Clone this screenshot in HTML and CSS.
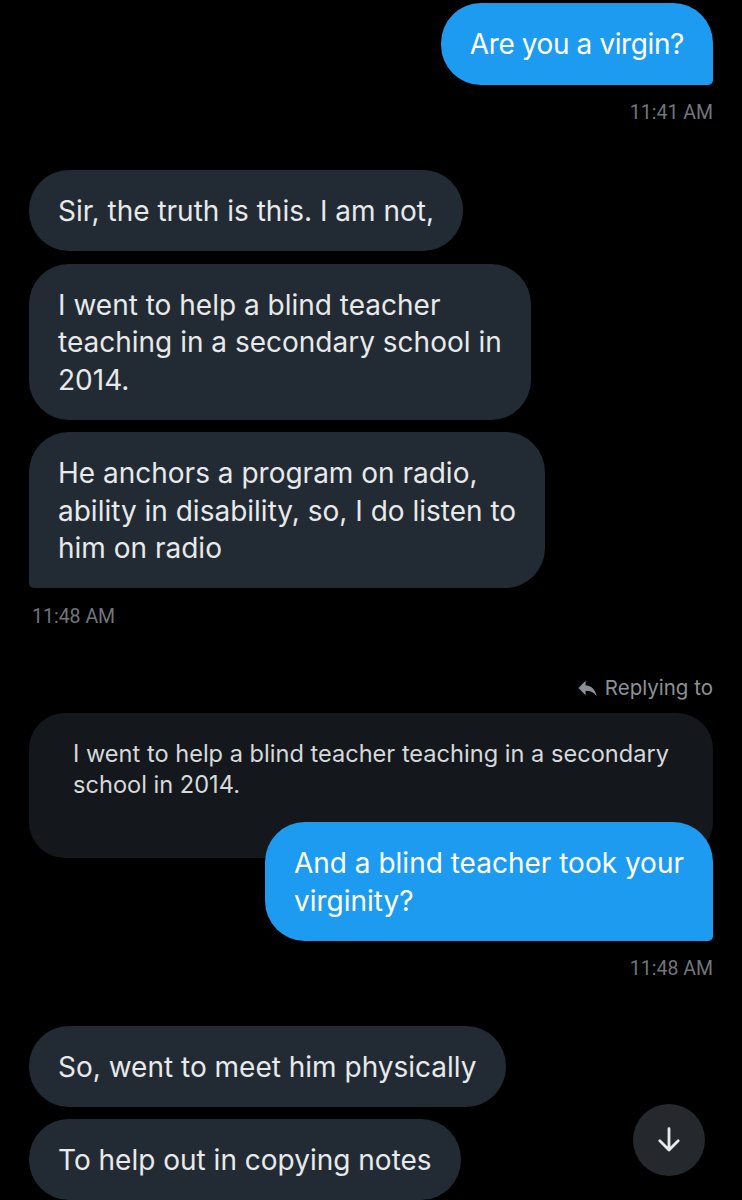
FILE: index.html
```html
<!DOCTYPE html>
<html>
<head>
<meta charset="utf-8">
<link rel="stylesheet" href="styles.css">
</head>
<body>
<div class="chat">
  <div class="msg sent first"><div class="bubble blue last tight">Are you a virgin?</div></div>
  <div class="time right">11:41 AM</div>

  <div class="group recv-group">
    <div class="bubble dark">Sir, the truth is this. I am not,</div>
    <div class="bubble dark">I went to help a blind teacher<br>teaching in a secondary school in<br>2014.</div>
    <div class="bubble dark last">He anchors a program on radio,<br>ability in disability, so, I do listen to<br>him on radio</div>
  </div>
  <div class="time left">11:48 AM</div>

  <div class="replying">
    <svg class="reply-icon" viewBox="0 0 24 24"><path d="M10 8.5V4L2.5 11.5 10 19v-4.6c5.2 0 8.8 1.7 11.5 5.6-1-5.6-4.3-11-11.5-11.5z"/></svg>
    <span>Replying to</span>
  </div>
  <div class="quote">I went to help a blind teacher teaching in a secondary<br>school in 2014.</div>
  <div class="msg sent overlap"><div class="bubble blue last">And a blind teacher took your<br>virginity?</div></div>
  <div class="time right">11:48 AM</div>

  <div class="group recv-group second">
    <div class="bubble dark">So, went to meet him physically</div>
    <div class="bubble dark">To help out in copying notes</div>
  </div>
</div>
<button class="scroll-down" aria-label="Scroll down">
  <svg viewBox="0 0 24 24"><path d="M12 4v15M5.5 12.5 12 19l6.5-6.5"/></svg>
</button>
</body>
</html>
```

FILE: styles.css
```css
html, body {
  margin: 0;
  padding: 0;
  background: #000;
  height: 1200px;
  overflow: hidden;
}

body {
  position: relative;
  font-family: Inter, "Noto Sans", sans-serif;
  color: #e7e9ea;
}

.chat {
  display: flex;
  flex-direction: column;
  padding: 3px 29px 0 29px;
}

.msg.sent {
  display: flex;
  justify-content: flex-end;
}

.bubble {
  font-size: 28px;
  line-height: 37.5px;
  padding: 23px 29px 20.5px;
  border-radius: 40px;
  width: fit-content;
  box-sizing: border-box;
}

.bubble.tight {
  letter-spacing: -0.4px;
  padding-bottom: 21.5px;
}

.bubble.blue {
  background: #1d9bf0;
  color: #fff;
}

.bubble.blue.last {
  border-bottom-right-radius: 5px;
}

.bubble.dark {
  background: #222b33;
  color: #e7e9ea;
}

.bubble.dark.last {
  border-bottom-left-radius: 5px;
}

.group {
  display: flex;
  flex-direction: column;
  gap: 12.5px;
}

.recv-group {
  margin-top: 45px;
}

.recv-group.second {
  margin-top: 45px;
}

.time {
  font-family: Roboto, "Liberation Sans", sans-serif;
  font-size: 19.5px;
  line-height: 24px;
  color: #71767b;
  margin-top: 16px;
}

.time.right { text-align: right; }
.time.left { margin-left: 3px; margin-top: 17px; }

.replying {
  display: flex;
  justify-content: flex-end;
  align-items: center;
  gap: 6px;
  margin-top: 47px;
  font-size: 20.5px;
  line-height: 24px;
  color: #8b9196;
}

.reply-icon {
  width: 23px;
  height: 23px;
  fill: #8b9196;
}

.quote {
  margin-top: 13px;
  background: #14181c;
  border-radius: 36px;
  padding: 25px 30px 58px 44px;
  font-size: 23.6px;
  line-height: 31px;
  color: #d6d9db;
}

.msg.overlap {
  margin-top: -36px;
}

.scroll-down {
  position: absolute;
  left: 633px;
  top: 1104px;
  width: 72px;
  height: 72px;
  border-radius: 50%;
  border: none;
  padding: 0;
  background: #25282c;
  display: flex;
  align-items: center;
  justify-content: center;
}

.scroll-down svg {
  width: 34px;
  height: 34px;
  fill: none;
  stroke: #e7e9ea;
  stroke-width: 2;
  stroke-linecap: round;
  stroke-linejoin: round;
}
```
